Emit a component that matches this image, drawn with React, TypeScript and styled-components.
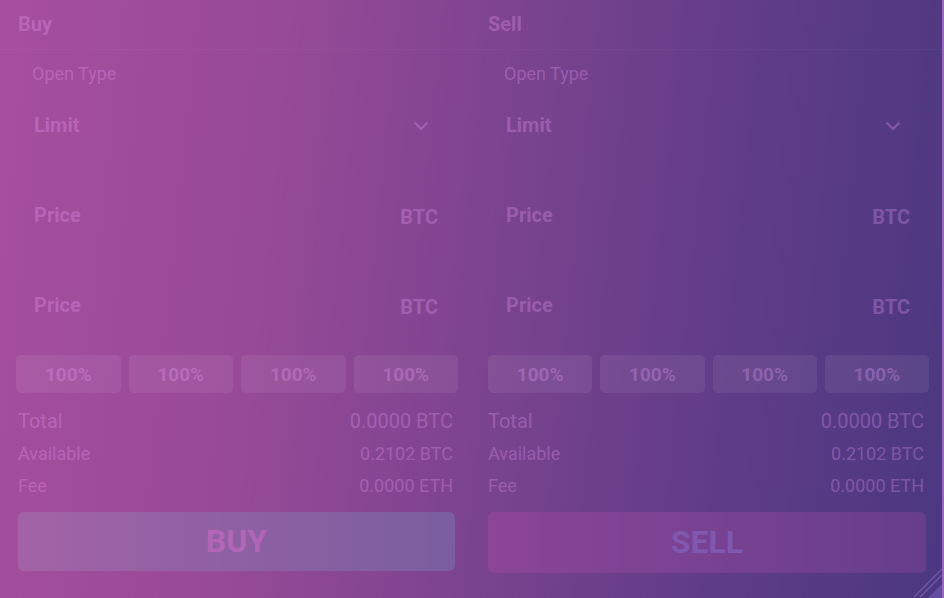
import React from "react";
import styled, { createGlobalStyle } from "styled-components";

const Global = createGlobalStyle`
  html, body { margin: 0; padding: 0; }
  body { font-family: Roboto, "Liberation Sans", Arial, sans-serif; }
  * { box-sizing: border-box; }
`;

const Page = styled.div`
  position: relative;
  width: 944px;
  height: 598px;
  overflow: hidden;
  background: linear-gradient(96deg, #a64f9e 0%, #974a97 28%, #7e4490 50%, #643d89 72%, #4b3880 100%);
  border-right: 2px solid rgba(150, 120, 220, 0.55);
  color: rgba(240, 160, 255, 0.3);
`;

const Grid = styled.div`
  display: grid;
  grid-template-columns: 437px 438px;
  column-gap: 33px;
  padding: 0 18px;
`;

const HeaderBar = styled(Grid)`
  height: 50px;
  align-items: center;
  border-bottom: 1px solid rgba(255, 255, 255, 0.03);
`;

const Title = styled.div`
  font-size: 20px;
  font-weight: 700;
  margin-top: -2px;
`;

const Column = styled.div`
  display: flex;
  flex-direction: column;
`;

const Label = styled.div<{ $shift: number }>`
  margin-top: 14px;
  padding-left: ${(p) => 14 + p.$shift}px;
  height: 20px;
  line-height: 20px;
  font-size: 18px;
  font-weight: 400;
`;

const Field = styled.div<{ $pr: number; $mt: number; $shift: number }>`
  height: 60px;
  margin-top: ${(p) => p.$mt}px;
  display: flex;
  align-items: center;
  justify-content: space-between;
  padding-left: ${(p) => 16 + p.$shift}px;
  padding-right: ${(p) => p.$pr}px;
  font-size: 20px;
  font-weight: 700;
`;

const Unit = styled.span`
  margin-top: 4px;
`;

const Chevron = () => (
  <svg width="16" height="10" viewBox="0 0 16 10" style={{ marginTop: 2 }}>
    <polyline points="1.5,1.5 8,8 14.5,1.5" fill="none" stroke="currentColor" strokeWidth="2.2" />
  </svg>
);

const PctRow = styled.div<{ $shift: number }>`
  margin: 20px -3px 0 ${(p) => p.$shift - 2}px;
  display: grid;
  grid-template-columns: repeat(4, 1fr);
  column-gap: 8px;
`;

const PctButton = styled.div`
  height: 38px;
  border-radius: 5px;
  background: rgba(255, 255, 255, 0.07);
  display: flex;
  align-items: center;
  justify-content: center;
  font-size: 19px;
  font-weight: 700;
`;

const Summary = styled.div`
  margin-top: 12px;
  display: flex;
  flex-direction: column;
`;

const SumRow = styled.div<{ $big?: boolean }>`
  height: 32px;
  display: flex;
  align-items: center;
  justify-content: space-between;
  padding-right: 2px;
  font-size: ${(p) => (p.$big ? 20 : 18)}px;
  font-weight: 400;
`;

const Action = styled.div<{ $from: string; $to: string; $text: string; $h: number }>`
  margin-top: 11px;
  height: ${(p) => p.$h}px;
  border-radius: 6px;
  background: linear-gradient(90deg, ${(p) => p.$from}, ${(p) => p.$to});
  color: ${(p) => p.$text};
  display: flex;
  align-items: center;
  justify-content: center;
  padding-bottom: 2px;
  font-size: 32px;
  font-weight: 700;
`;

const Corner = styled.svg`
  position: absolute;
  right: 0;
  bottom: 0;
`;

type SideConf = {
  shift: number;
  unitPad: number;
  chevPad: number;
  action: string;
  from: string;
  to: string;
  text: string;
  h: number;
};

const Side: React.FC<{ s: SideConf }> = ({ s }) => (
  <Column>
    <Label $shift={s.shift}>Open Type</Label>
    <Field $pr={s.chevPad} $mt={11} $shift={s.shift}>
      <span>Limit</span>
      <Chevron />
    </Field>
    <Field $pr={s.unitPad} $mt={30} $shift={s.shift}>
      <span>Price</span>
      <Unit>BTC</Unit>
    </Field>
    <Field $pr={s.unitPad} $mt={30} $shift={s.shift}>
      <span>Price</span>
      <Unit>BTC</Unit>
    </Field>
    <PctRow $shift={s.shift}>
      {[0, 1, 2, 3].map((i) => (
        <PctButton key={i}>100%</PctButton>
      ))}
    </PctRow>
    <Summary>
      <SumRow $big>
        <span>Total</span>
        <span>0.0000 BTC</span>
      </SumRow>
      <SumRow>
        <span>Available</span>
        <span>0.2102 BTC</span>
      </SumRow>
      <SumRow>
        <span>Fee</span>
        <span>0.0000 ETH</span>
      </SumRow>
    </Summary>
    <Action $from={s.from} $to={s.to} $text={s.text} $h={s.h}>
      {s.action}
    </Action>
  </Column>
);

export default function App() {
  const buy: SideConf = {
    shift: 0,
    unitPad: 17,
    chevPad: 26,
    action: "BUY",
    from: "#a263a6",
    to: "#7a5e9f",
    text: "rgba(205, 105, 200, 0.6)",
    h: 59,
  };
  const sell: SideConf = {
    shift: 2,
    unitPad: 16,
    chevPad: 25,
    action: "SELL",
    from: "#8c4598",
    to: "#663e8c",
    text: "rgba(130, 95, 185, 0.8)",
    h: 61,
  };
  return (
    <>
      <Global />
      <Page>
        <HeaderBar>
          <Title>Buy</Title>
          <Title>Sell</Title>
        </HeaderBar>
        <Grid>
          <Side s={buy} />
          <Side s={sell} />
        </Grid>
        <Corner width="32" height="36" viewBox="0 0 32 36">
          <line x1="4" y1="35" x2="32" y2="7" stroke="rgba(170,150,230,0.35)" strokeWidth="1.5" />
          <line x1="10" y1="35" x2="32" y2="13" stroke="rgba(170,150,230,0.35)" strokeWidth="1.5" />
          <polygon points="18,36 32,22 32,36" fill="rgba(150,120,220,0.35)" />
        </Corner>
      </Page>
    </>
  );
}
